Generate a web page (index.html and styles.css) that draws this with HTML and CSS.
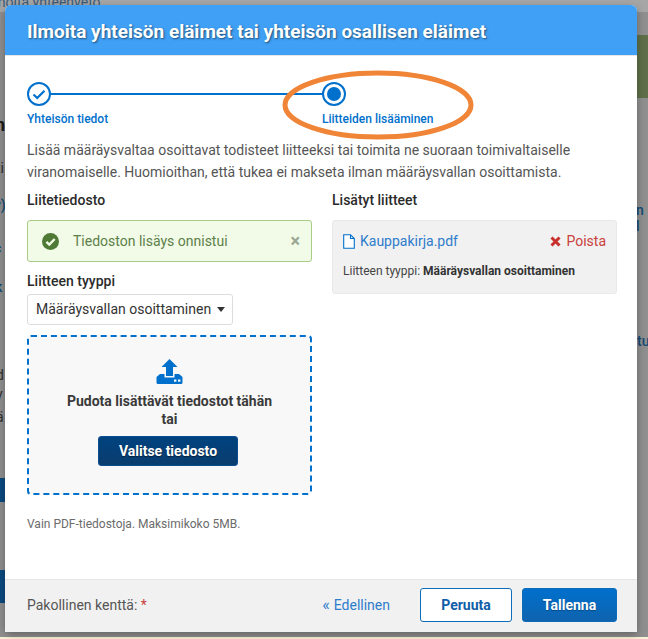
FILE: index.html
```html
<!DOCTYPE html>
<html lang="fi">
<head>
  <meta charset="UTF-8">
  <title>Ilmoita yhteisön eläimet</title>
  <link rel="stylesheet" href="styles.css">
</head>
<body>

<!-- sivu modaalin takana, vain reunat näkyvät -->
<div class="page">
  <div class="page-top">Ilmoita yhteenveto</div>
  <div class="page-sides">
    <div class="side side-left">
      <div class="side-big">n</div>
      <div class="side-text side-ti">ti</div>
      <div class="side-link side-paren">y)</div>
      <div class="side-link side-c">c</div>
      <div class="side-link side-k">k</div>
      <div class="side-text side-d">d</div>
      <div class="side-text side-yl">y</div>
      <div class="side-text side-a">ä</div>
      <div class="side-block side-block-1"></div>
      <div class="side-block side-block-2"></div>
    </div>
    <div class="side side-right">
      <div class="side-photo"></div>
      <div class="side-link side-n">n l</div>
      <div class="side-link side-tu">tu</div>
    </div>
  </div>
  <div class="page-bottom"></div>
</div>

<div class="modal">
  <div class="modal-header">
    <h1>Ilmoita yhteisön eläimet tai yhteisön osallisen eläimet</h1>
  </div>

  <div class="modal-body">
    <div class="steps">
      <div class="step step-done">
        <span class="step-circle">
          <svg width="14" height="11" viewBox="0 0 14 11"><path d="M1.5 5.5 L5.2 9 L12.5 1.8" fill="none" stroke="#0070cd" stroke-width="2.2"/></svg>
        </span>
        <span class="step-label">Yhteisön tiedot</span>
      </div>
      <div class="step step-current">
        <span class="step-circle"><span class="step-dot"></span></span>
        <span class="step-label">Liitteiden lisääminen</span>
      </div>
    </div>

    <p class="intro">Lisää määräysvaltaa osoittavat todisteet liitteeksi tai toimita ne suoraan toimivaltaiselle viranomaiselle. Huomioithan, että tukea ei makseta ilman määräysvallan osoittamista.</p>

    <div class="columns">
      <div class="col">
        <h2>Liitetiedosto</h2>
        <div class="alert">
          <svg class="alert-icon" width="17" height="17" viewBox="0 0 17 17">
            <circle cx="8.5" cy="8.5" r="8.5" fill="#4f7a35"/>
            <path d="M4.4 8.8 L7.3 11.6 L12.7 6" fill="none" stroke="#f1fbe8" stroke-width="2.4"/>
          </svg>
          <span class="alert-text">Tiedoston lisäys onnistui</span>
          <span class="alert-close">×</span>
        </div>

        <h2 class="type-title">Liitteen tyyppi</h2>
        <div class="select">Määräysvallan osoittaminen<span class="caret"></span></div>

        <div class="dropzone">
          <svg class="upload-icon" width="27" height="25" viewBox="0 0 27 25">
            <path d="M13.5 0 L21.5 8 H17 V17 H10 V8 H5.5 Z" fill="#0070cd"/>
            <path d="M4 15 H8.5 V18.5 H18.5 V15 H23 L26.5 18 V23.5 Q26.5 25 25 25 H2 Q0.5 25 0.5 23.5 V18 Z" fill="#0070cd"/>
            <rect x="18" y="20.5" width="2.4" height="2.2" fill="#fff"/>
            <rect x="22" y="20.5" width="2.4" height="2.2" fill="#fff"/>
          </svg>
          <div class="drop-text">Pudota lisättävät tiedostot tähän<br>tai</div>
          <button class="btn btn-dark">Valitse tiedosto</button>
        </div>

        <p class="hint">Vain PDF-tiedostoja. Maksimikoko 5MB.</p>
      </div>

      <div class="col">
        <h2>Lisätyt liitteet</h2>
        <div class="file-card">
          <div class="file-row">
            <a class="file-link">
              <svg width="12" height="15" viewBox="0 0 12 15"><path d="M0.7 0.7 H7.5 L11.3 4.5 V14.3 H0.7 Z M7.5 0.7 V4.5 H11.3" fill="#fff" stroke="#0070cd" stroke-width="1.1"/></svg>
              Kauppakirja.pdf
            </a>
            <a class="file-remove">
              <svg width="11" height="11" viewBox="0 0 11 11"><path d="M1.5 1.5 L9.5 9.5 M9.5 1.5 L1.5 9.5" stroke="#c9302c" stroke-width="3"/></svg>
              Poista
            </a>
          </div>
          <div class="file-type">Liitteen tyyppi: <b>Määräysvallan osoittaminen</b></div>
        </div>
      </div>
    </div>
  </div>

  <div class="modal-footer">
    <div class="required">Pakollinen kenttä: <span class="star">*</span></div>
    <a class="prev"><span class="prev-arrows">«</span>Edellinen</a>
    <button class="btn btn-outline">Peruuta</button>
    <button class="btn btn-primary">Tallenna</button>
  </div>

  <!-- käsin piirretty korostus kuvakaappauksen päällä -->
  <svg class="highlight" width="200" height="74" viewBox="0 0 200 74">
    <ellipse cx="98" cy="37" rx="93" ry="32" fill="none" stroke="#f08437" stroke-width="5"/>
  </svg>
</div>

</body>
</html>
```

FILE: styles.css
```css
* {
  box-sizing: border-box;
}
html, body {
  margin: 0;
  height: 100%;
}
body {
  font-family: 'Roboto', sans-serif;
  font-size: 14px;
  color: #444;
  background: #8f8f8f;
  overflow: hidden;
}

/* sivu taustalla */
.page {
  height: 639px;
  display: flex;
  flex-direction: column;
  background: #8f8f8f;
  overflow: hidden;
}
.page-top {
  height: 18px;
  flex: none;
  margin-top: -6px;
  text-indent: -14px;
  font-size: 14px;
  line-height: 16px;
  color: #3a5a78;
  background: #a6a6a6;
}
.page-sides {
  flex: 1;
  display: flex;
  justify-content: space-between;
}
.side {
  overflow: hidden;
  color: #333;
}
.side-left {
  width: 8px;
}
.side-right {
  width: 11px;
}
.side-big {
  margin-top: 101px;
  margin-left: -5px;
  font-size: 18px;
  font-weight: 700;
  line-height: 24px;
  color: #1c1c1c;
}
.side-text {
  font-size: 14px;
  line-height: 16px;
  margin-left: -4px;
  color: #2e2e2e;
}
.side-link {
  font-size: 14px;
  line-height: 16px;
  color: #134a75;
  font-weight: 500;
}
.side-ti {
  margin-top: 23px;
}
.side-paren {
  margin-top: 21px;
  margin-left: -6px;
}
.side-c {
  margin-top: 27px;
  margin-left: -6px;
}
.side-k {
  margin-top: 23px;
  margin-left: -5px;
}
.side-d {
  margin-top: 72px;
}
.side-yl {
  margin-top: 3px;
}
.side-a {
  margin-top: 7px;
}
.side-block {
  background: #0c4a80;
}
.side-block-1 {
  height: 24px;
  margin-top: 53px;
}
.side-block-2 {
  height: 33px;
  margin-top: 68px;
}
.side-photo {
  height: 63px;
  margin-top: 23px;
  background: #5f7048;
}
.side-n {
  margin-top: 104px;
  margin-left: -1px;
}
.side-tu {
  margin-top: 99px;
}
.page-bottom {
  height: 2px;
  flex: none;
  background: #fdf3d8;
}

/* modaali */
.modal {
  position: absolute;
  left: 5px;
  top: 5px;
  width: 632px;
  height: 627px;
  display: flex;
  flex-direction: column;
  background: #fff;
  border-radius: 6px 6px 2px 6px;
  box-shadow: 0 3px 9px rgba(0,0,0,0.3);
}
.modal-header {
  height: 51px;
  flex: none;
  padding: 3px 22px 0;
  display: flex;
  align-items: center;
  background: #40a0f5;
  border-radius: 6px 6px 0 0;
  border-bottom: 1px solid #e5e5e5;
}
.modal-header h1 {
  margin: 0;
  font-size: 19px;
  font-weight: 700;
  color: #fff;
  text-shadow: 1px 1px 2px rgba(0,0,0,0.5);
}
.modal-body {
  flex: 1;
  padding: 26px 20px 0 22px;
}

/* vaiheet */
.steps {
  display: flex;
  gap: 113px;
}
.step {
  display: flex;
  flex-direction: column;
  align-items: flex-start;
  width: 182px;
  position: relative;
  gap: 7px;
}
.step-done::after {
  content: "";
  position: absolute;
  left: 24px;
  top: 10.5px;
  width: 272px;
  height: 2px;
  background: #0070cd;
}
.step-circle {
  width: 24px;
  height: 24px;
  border: 2px solid #0070cd;
  border-radius: 50%;
  background: #fff;
  display: flex;
  align-items: center;
  justify-content: center;
}
.step-dot {
  width: 14px;
  height: 14px;
  border-radius: 50%;
  background: #0070cd;
}
.step-label {
  font-size: 12px;
  font-weight: 500;
  line-height: 13px;
  color: #0070cd;
}

.intro {
  margin: 13px 0 0;
  line-height: 22px;
  color: #555;
}
.columns {
  display: grid;
  grid-template-columns: 285px 285px;
  gap: 20px;
  margin-top: 6px;
}
h2 {
  margin: 0;
  font-size: 14px;
  font-weight: 500;
  line-height: 22px;
  color: #2b2b2b;
}

/* ilmoitus */
.alert {
  display: flex;
  align-items: center;
  height: 42px;
  margin-top: 9px;
  padding: 0 11px 0 14px;
  background: #f1fbe8;
  border: 1px solid #a9cc87;
  border-radius: 3px;
  color: #5d8048;
}
.alert-icon {
  flex: none;
}
.alert-text {
  flex: 1;
  margin-left: 14px;
}
.alert-close {
  font-size: 18px;
  font-weight: 700;
  line-height: 16px;
  color: #9aa795;
}

.type-title {
  margin-top: 8px;
}
.select {
  display: flex;
  align-items: center;
  width: 206px;
  height: 31px;
  margin-top: 2px;
  padding: 0 0 2px 8px;
  background: #fff;
  border: 1px solid #ddd;
  border-radius: 3px;
  color: #333;
}
.caret {
  margin-left: 6px;
  margin-top: 2px;
  border-left: 4px solid transparent;
  border-right: 4px solid transparent;
  border-top: 5px solid #333;
}

/* pudotusalue */
.dropzone {
  display: flex;
  flex-direction: column;
  align-items: center;
  height: 160px;
  margin-top: 10px;
  padding-top: 22px;
  background: #f8f8f8;
  border: 2px dashed #0070cd;
  border-radius: 4px;
}
.drop-text {
  margin-top: 8px;
  font-weight: 700;
  line-height: 18px;
  text-align: center;
  color: #3a3a3a;
}
.btn {
  font-family: inherit;
  font-size: 14px;
  font-weight: 700;
  height: 34px;
  border-radius: 3px;
  cursor: pointer;
}
.btn-dark {
  width: 140px;
  height: 30px;
  margin-top: 8px;
  margin-right: 3px;
  color: #fff;
  background: linear-gradient(#00427f, #0a3d6e);
  border: 1px solid #0a4f8f;
  text-shadow: 0 1px 1px rgba(0,0,0,0.5);
}
.hint {
  margin: 22px 0 0;
  font-size: 12px;
  line-height: 14px;
  color: #6b6b6b;
}

/* lisatty tiedosto */
.file-card {
  height: 74px;
  margin-top: 9px;
  padding: 12px 10px 0 10px;
  background: #f1f1f1;
  border: 1px solid #e9e9e9;
  border-radius: 3px;
}
.file-row {
  display: flex;
  justify-content: space-between;
  align-items: center;
}
.file-link {
  display: flex;
  align-items: center;
  gap: 5px;
  color: #2e7ccc;
  cursor: pointer;
}
.file-remove {
  display: flex;
  align-items: center;
  gap: 5px;
  color: #c9403c;
  cursor: pointer;
}
.file-type {
  margin-top: 15px;
  font-size: 12px;
  line-height: 14px;
  color: #444;
}
.file-type b {
  font-weight: 700;
  color: #333;
}

/* alapalkki */
.modal-footer {
  height: 53px;
  flex: none;
  display: flex;
  align-items: center;
  padding: 0 20px 3px 22px;
  background: #f1f1f1;
  border-top: 1px solid #e5e5e5;
}
.required {
  flex: 1;
  color: #555;
}
.star {
  color: #c9403c;
}
.prev {
  margin-right: 30px;
  color: #2e7ccc;
  cursor: pointer;
}
.prev-arrows {
  margin-right: 4px;
  font-size: 16px;
  line-height: 14px;
}
.btn-outline {
  width: 92px;
  margin-right: 10px;
  color: #0f5ea8;
  background: #fff;
  border: 1px solid #0f6cb8;
}
.btn-primary {
  width: 95px;
  color: #fff;
  background: linear-gradient(#0070cd, #0f63ae);
  border: 1px solid #0f6cb8;
  text-shadow: 0 1px 1px rgba(0,0,0,0.3);
}

/* oranssi korostus */
.highlight {
  position: absolute;
  left: 275px;
  top: 63px;
}
```
